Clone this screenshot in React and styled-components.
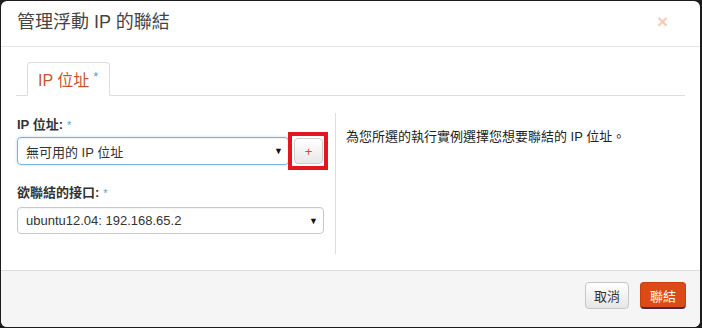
import React from "react";
import styled, { createGlobalStyle } from "styled-components";

const Global = createGlobalStyle`
  html, body { margin: 0; padding: 0; background: #1c1c1c; }
  body { font-family: "Liberation Sans", "Noto Sans CJK TC", Arial, sans-serif; color: #333; }
  * { box-sizing: border-box; }
`;

const Modal = styled.div`
  margin: 1px 2px 0 1px;
  width: 699px;
  height: 326px;
  background: #fff;
  border-radius: 6px;
  overflow: hidden;
  display: flex;
  flex-direction: column;
`;

const Header = styled.div`
  height: 46px;
  flex: none;
  border-bottom: 1px solid #e5e5e5;
  display: flex;
  align-items: center;
  justify-content: space-between;
  padding: 0 32px 0 16px;
`;

const Title = styled.h3`
  margin: 0;
  font-size: 18px;
  font-weight: normal;
  color: #444;
  line-height: 20px;
  padding-bottom: 3px;
`;

const Close = styled.span`
  font-size: 19px;
  font-weight: bold;
  color: #f2cdb9;
  line-height: 1;
  margin-bottom: 4px;
`;

const Body = styled.div`
  flex: 1;
  padding: 15px 15px 0 15px;
`;

const TabBar = styled.div`
  display: flex;
  border-bottom: 1px solid #ddd;
  padding-left: 11px;
  height: 34px;
`;

const Tab = styled.div`
  border: 1px solid #ddd;
  border-bottom-color: #fff;
  border-radius: 4px 4px 0 0;
  background: #fff;
  height: 34px;
  padding: 0 11px 0 10px;
  display: flex;
  align-items: center;
  font-size: 16px;
  color: #c4562f;
  margin-bottom: -1px;
`;

const Req = styled.span`
  color: #6b9dc4;
  font-size: ${(p) => p.$size || 12}px;
  margin-left: 4px;
  align-self: flex-start;
  margin-top: ${(p) => p.$top || 0}px;
  font-weight: normal;
`;

const Content = styled.div`
  display: flex;
  margin-top: 17px;
`;

const LeftCol = styled.div`
  width: 320px;
  padding: 4px 0 20px 1px;
  border-right: 1px solid #ddd;
  height: 141px;
`;

const RightCol = styled.div`
  padding: 13px 0 0 10px;
  font-size: 13px;
  color: #222;
`;

const Label = styled.div`
  display: flex;
  font-size: 13px;
  font-weight: bold;
  color: #333;
  line-height: 16px;
  margin-bottom: ${(p) => p.$mb || 4}px;
  margin-top: ${(p) => p.$mt || 0}px;
`;

const Row = styled.div`
  display: flex;
  align-items: center;
`;

const Select = styled.div`
  width: ${(p) => p.$w}px;
  height: ${(p) => p.$h}px;
  border: 1px solid ${(p) => (p.$focus ? "#7fb0dc" : "#c8c8c8")};
  border-radius: 4px;
  box-shadow: ${(p) => (p.$focus ? "inset 0 1px 1px rgba(0,0,0,.06), 0 0 3px rgba(102,175,233,.45)" : "inset 0 1px 1px rgba(0,0,0,.04)")};
  display: flex;
  align-items: center;
  justify-content: space-between;
  padding: 0 5px 0 8px;
  font-size: 13px;
  color: #333;
`;

const Arrow = styled.span`
  font-size: 9px;
  color: #111;
`;

const Highlight = styled.div`
  border: 4px solid #e3151f;
  padding: 2px 1px 2px 2px;
  margin: -5px 0 -5px -1px;
  display: flex;
`;

const AddButton = styled.div`
  width: 29px;
  height: 26px;
  border: 1px solid #ccc;
  border-radius: 4px;
  background: linear-gradient(#fff, #e8e8e8);
  display: flex;
  align-items: center;
  justify-content: center;
  color: #e0492a;
  font-size: 13px;
`;

const Footer = styled.div`
  height: 57px;
  flex: none;
  border-top: 1px solid #ddd;
  background: #f5f5f5;
  display: flex;
  justify-content: flex-end;
  align-items: flex-start;
  gap: 11px;
  padding: 11px 14px 0 0;
`;

const Button = styled.div`
  height: 27px;
  padding: 0 ${(p) => (p.$primary ? 9 : 8)}px;
  border-radius: 4px;
  font-size: 13px;
  display: flex;
  align-items: center;
  ${(p) =>
    p.$primary
      ? `background: #dc4a17; color: #fff; border: 1px solid #c9400f; border-bottom: 2px solid #4b2a52;`
      : `background: linear-gradient(#fff, #e6e6e6); color: #333; border: 1px solid #c6c6c6;`}
`;

export default function App() {
  return (
    <>
      <Global />
      <Modal>
        <Header>
          <Title>管理浮動 IP 的聯結</Title>
          <Close>×</Close>
        </Header>
        <Body>
          <TabBar>
            <Tab>
              IP 位址<Req $size={13} $top={6}>*</Req>
            </Tab>
          </TabBar>
          <Content>
            <LeftCol>
              <Label>
                IP 位址:<Req $size={11}>*</Req>
              </Label>
              <Row>
                <Select $w={272} $h={28} $focus>
                  無可用的 IP 位址
                  <Arrow>▼</Arrow>
                </Select>
                <Highlight>
                  <AddButton>+</AddButton>
                </Highlight>
              </Row>
              <Label $mt={20} $mb={6}>
                欲聯結的接口:<Req $size={11}>*</Req>
              </Label>
              <Select $w={307} $h={27}>
                ubuntu12.04: 192.168.65.2
                <Arrow>▼</Arrow>
              </Select>
            </LeftCol>
            <RightCol>為您所選的執行實例選擇您想要聯結的 IP 位址。</RightCol>
          </Content>
        </Body>
        <Footer>
          <Button>取消</Button>
          <Button $primary>聯結</Button>
        </Footer>
      </Modal>
    </>
  );
}
